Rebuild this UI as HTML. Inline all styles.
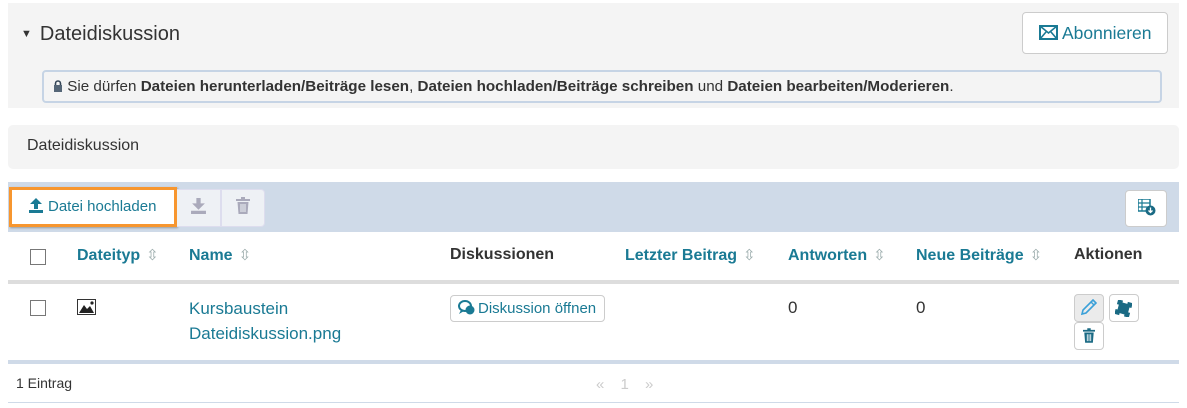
<!DOCTYPE html>
<html><head><meta charset="utf-8"><style>
*{box-sizing:border-box}
body{margin:0;width:1187px;height:408px;background:#fff;font-family:"Liberation Sans",Arial,sans-serif;color:#333;position:relative;overflow:hidden}
.a{position:absolute}
.teal{color:#1a7a94}
.btn{position:absolute;background:#fff;border:1px solid #ccc;border-radius:4px}
.th{position:absolute;top:246px;font-weight:bold;font-size:16px;white-space:nowrap}
.sort{color:#9aa;font-weight:normal;font-size:15px;margin-left:6px}
.cb{position:absolute;width:16px;height:16px;border:1px solid #777;background:#fff}
</style></head><body>
<div class="a" style="left:8px;top:3px;width:1171px;height:105px;background:#f4f4f4"></div>
<div class="a" style="left:21px;top:23px;font-size:20px;color:#333"><span style="font-size:11px;vertical-align:3px;margin-right:8px">▼</span>Dateidiskussion</div>
<div class="btn" style="left:1022px;top:12px;width:146px;height:42px;font-size:17.5px;padding:10px 0 0 16px;color:#1a7a94;white-space:nowrap"><svg width="19" height="15" viewBox="0 0 19 15" style="vertical-align:-1px;margin-right:4px"><rect x="1" y="1" width="17" height="13" fill="none" stroke="#1a7a94" stroke-width="2"/><path d="M1 1L9.5 8L18 1M1 14L7 7M18 14L12 7" fill="none" stroke="#1a7a94" stroke-width="1.6"/></svg>Abonnieren</div>
<div class="a" style="left:42px;top:70px;width:1120px;height:33px;border:2px solid #c6d4e5;border-radius:4px;font-size:15.2px;padding:6px 0 0 9px;white-space:nowrap"><svg width="10" height="12" viewBox="0 0 10 12" style="vertical-align:-1px"><path d="M2.5 5V3.5a2.5 2.5 0 0 1 5 0V5" fill="none" stroke="#345" stroke-width="1.6"/><rect x="1" y="5" width="8" height="7" fill="#567"/></svg> Sie dürfen <b>Dateien herunterladen/Beiträge lesen</b>, <b>Dateien hochladen/Beiträge schreiben</b> und <b>Dateien bearbeiten/Moderieren</b>.</div>
<div class="a" style="left:8px;top:125px;width:1171px;height:44px;background:#f4f4f4;border-radius:5px;font-size:16px;padding:12px 0 0 19px">Dateidiskussion</div>
<div class="a" style="left:8px;top:182px;width:1171px;height:50px;background:#cfdae8"></div>
<div class="a" style="left:9px;top:187px;width:168px;height:40px;border:3px solid #f7962f;background:#fff;font-size:15px;padding:8px 0 0 17px;color:#1a7a94;box-shadow:1px 1px 2px #999;white-space:nowrap"><svg width="14" height="15" viewBox="0 0 14 15" style="vertical-align:-2px;margin-right:5px"><path d="M7 0L13 6H9V11H5V6H1Z M0 12H14V15H0Z" fill="#1a7a94"/></svg>Datei hochladen</div>
<div class="a" style="left:177px;top:189px;width:44px;height:38px;background:#eef1f5;border:1px solid #dde;border-left:none"></div>
<svg class="a" style="left:191px;top:198px" width="15" height="16" viewBox="0 0 14 15"><path d="M5 0H9V5H13L7 11L1 5H5Z M0 12H14V15H0Z" fill="#aab"/></svg>
<div class="a" style="left:221px;top:189px;width:44px;height:38px;background:#eef1f5;border:1px solid #dde;border-radius:0 4px 4px 0"></div>
<svg class="a" style="left:236px;top:197px" width="14" height="17" viewBox="0 0 14 17"><path d="M0 2H14V4H0Z M5 0H9V2H5Z M1.5 5H12.5L11.5 17H2.5Z" fill="#aab"/><path d="M5 7V15M7 7V15M9 7V15" stroke="#eef1f5" stroke-width="1"/></svg>
<div class="btn" style="left:1125px;top:190px;width:42px;height:37px"></div>
<svg class="a" style="left:1138px;top:199px" width="18" height="17" viewBox="0 0 18 17"><path d="M0 0H12V12H0Z" fill="none" stroke="#1a7a94" stroke-width="1.5"/><path d="M0 4H12M0 8H12M4 0V12" stroke="#1a7a94" stroke-width="1.2"/><circle cx="12.5" cy="11.5" r="5" fill="#1a6a84"/><path d="M12.5 8.5V13M10.5 11.5L12.5 13.5L14.5 11.5" stroke="#fff" stroke-width="1.3" fill="none"/></svg>
<div class="cb" style="left:30px;top:249px"></div>
<div class="th teal" style="left:77px">Dateityp<span class="sort">⇳</span></div>
<div class="th teal" style="left:189px">Name<span class="sort">⇳</span></div>
<div class="th" style="left:450px">Diskussionen</div>
<div class="th teal" style="left:625px">Letzter Beitrag<span class="sort">⇳</span></div>
<div class="th teal" style="left:788px">Antworten<span class="sort">⇳</span></div>
<div class="th teal" style="left:916px">Neue Beiträge<span class="sort">⇳</span></div>
<div class="th" style="left:1074px">Aktionen</div>
<div class="a" style="left:8px;top:280px;width:1171px;height:4px;background:#ddd"></div>
<div class="cb" style="left:30px;top:300px"></div>
<svg class="a" style="left:77px;top:299px" width="19" height="16" viewBox="0 0 19 16"><rect x="0.5" y="0.5" width="18" height="15" fill="#fff" stroke="#333"/><path d="M2 14L7 6L10 10L13 7L17 14Z" fill="#222"/><circle cx="15" cy="4" r="1.6" fill="#222"/></svg>
<div class="a teal" style="left:189px;top:296px;font-size:17px;line-height:25px">Kursbaustein<br>Dateidiskussion.png</div>
<div class="btn" style="left:450px;top:295px;width:155px;height:27px;font-size:15px;padding:4px 0 0 7px;color:#1a7a94;white-space:nowrap"><svg width="17" height="15" viewBox="0 0 17 15" style="vertical-align:-2px;margin-right:3px"><ellipse cx="7" cy="6" rx="6" ry="5" fill="none" stroke="#1a7a94" stroke-width="2"/><path d="M3 10L1 14L6 11" fill="#1a7a94"/><circle cx="12" cy="10" r="4.5" fill="#1a7a94"/></svg>Diskussion öffnen</div>
<div class="a" style="left:788px;top:298px;font-size:17px">0</div>
<div class="a" style="left:916px;top:298px;font-size:17px">0</div>
<div class="btn" style="left:1074px;top:294px;width:30px;height:28px;background:#ebebeb"></div>
<svg class="a" style="left:1081px;top:299px" width="16" height="17" viewBox="0 0 16 17"><path d="M12 1L15 4L5 14L1 15L2 11Z" fill="none" stroke="#3aa0d8" stroke-width="1.6"/><path d="M10 3L13 6" stroke="#3aa0d8" stroke-width="1.4"/></svg>
<div class="btn" style="left:1109px;top:294px;width:30px;height:28px"></div>
<svg class="a" style="left:1115px;top:300px" width="17" height="17" viewBox="0 0 17 17"><path d="M1 1H6V3H11V1H16V6H14V11H16V16H11V14H6V16H1V11H3V6H1Z" fill="#1a6a84" transform="rotate(15 8.5 8.5)"/></svg>
<div class="btn" style="left:1074px;top:322px;width:30px;height:28px"></div>
<svg class="a" style="left:1083px;top:328px" width="12" height="15" viewBox="0 0 14 17"><path d="M0 2H14V4H0Z M5 0H9V2H5Z M1.5 5H12.5L11.5 17H2.5Z" fill="#1a6a84"/><path d="M5 7V15M7 7V15M9 7V15" stroke="#fff" stroke-width="1"/></svg>
<div class="a" style="left:8px;top:360px;width:1171px;height:4px;background:#cfdae8"></div>
<div class="a" style="left:16px;top:375px;font-size:14px">1 Eintrag</div>
<div class="a" style="left:596px;top:376px;font-size:15px;color:#ccc;word-spacing:12px">« 1 »</div>
<div class="a" style="left:8px;top:402px;width:1171px;height:1px;background:#cfdae8"></div>
</body></html>
